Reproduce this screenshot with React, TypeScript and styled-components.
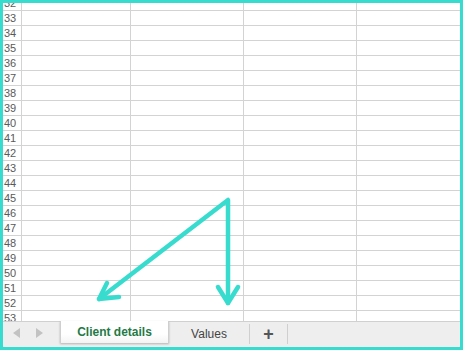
import React from 'react'
import styled, { createGlobalStyle } from 'styled-components'

const GlobalStyle = createGlobalStyle`
  html, body {
    margin: 0;
    padding: 0;
    background: #ffffff;
  }
`;

const Frame = styled.div`
  position: relative;
  width: 463px;
  height: 350px;
  box-sizing: border-box;
  border: 3px solid #38dccf;
  display: flex;
  flex-direction: column;
  font-family: "Liberation Sans", Arial, sans-serif;
  overflow: hidden;
`;

const Sheet = styled.div`
  flex: 1;
  overflow: hidden;
`;

const Rows = styled.div`
  margin-top: -7px;
`;

const RowLine = styled.div`
  display: grid;
  grid-template-columns: 19px 109px 113px 113px 1fr;
  height: 15px;
`;

const Cell = styled.div`
  box-sizing: border-box;
  border-right: 1px solid #d3d3d3;
  border-bottom: 1px solid #d3d3d3;
  &:last-child {
    border-right: none;
  }
`;

const RowNum = styled(Cell)`
  font-size: 11px;
  line-height: 14px;
  color: #5a5a5a;
  padding-left: 1px;
  overflow: hidden;
  white-space: nowrap;
`;

const TabBar = styled.div`
  height: 26px;
  flex-shrink: 0;
  display: flex;
  align-items: flex-start;
  background: #eeeeee;
  border-top: 1px solid #d0d0d0;
  box-sizing: border-box;
`;

const NavArrows = styled.div`
  width: 57px;
  height: 22px;
  display: flex;
  align-items: center;
  gap: 16px;
  padding-left: 10px;
  box-sizing: border-box;
`;

const NavArrow = styled.svg`
  width: 7px;
  height: 10px;
  fill: #c2c2c2;
`;

const ActiveTab = styled.div`
  width: 109px;
  height: 22px;
  margin-top: -1px;
  box-sizing: border-box;
  background: linear-gradient(#ffffff 0%, #ffffff 60%, #f3f3f3 100%);
  border-left: 1px solid #cfcfcf;
  border-right: 1px solid #cfcfcf;
  box-shadow: 0 1px 2px rgba(0, 0, 0, 0.25);
  display: flex;
  align-items: center;
  justify-content: center;
  font-size: 12px;
  font-weight: bold;
  color: #1f7a46;
`;

const Tab = styled.div<{ $w: number }>`
  width: ${p => p.$w}px;
  height: 20px;
  margin-top: 2px;
  box-sizing: border-box;
  border-right: 1px solid #cfcfcf;
  display: flex;
  align-items: center;
  justify-content: center;
  font-size: 12px;
  color: #444444;
`;

const Plus = styled.span`
  font-size: 18px;
  font-weight: bold;
  color: #555555;
  line-height: 18px;
`;

const Overlay = styled.svg`
  position: absolute;
  left: -3px;
  top: -3px;
  width: 463px;
  height: 350px;
  pointer-events: none;
`;

export default function App() {
    const rows = Array.from({ length: 22 }, (_, i) => 32 + i);
    return (
        <>
            <GlobalStyle />
            <Frame>
                <Sheet>
                    <Rows>
                        {rows.map(n => (
                            <RowLine key={n}>
                                <RowNum>{n}</RowNum>
                                <Cell />
                                <Cell />
                                <Cell />
                                <Cell />
                            </RowLine>
                        ))}
                    </Rows>
                </Sheet>
                <TabBar>
                    <NavArrows>
                        <NavArrow viewBox="0 0 7 10"><polygon points="7,0 7,10 0,5" /></NavArrow>
                        <NavArrow viewBox="0 0 7 10"><polygon points="0,0 0,10 7,5" /></NavArrow>
                    </NavArrows>
                    <ActiveTab>Client details</ActiveTab>
                    <Tab $w={81}>Values</Tab>
                    <Tab $w={38}><Plus>+</Plus></Tab>
                </TabBar>
                <Overlay viewBox="0 0 463 350">
                    <g stroke="#38dccf" strokeWidth="4.5" strokeLinecap="round" strokeLinejoin="round" fill="none">
                        <polyline points="99,299 228,200 228,303" />
                        <polyline points="107,283 99,299 119,297" />
                        <polyline points="218,287 228,303 238,287" />
                    </g>
                </Overlay>
            </Frame>
        </>
    );
}
